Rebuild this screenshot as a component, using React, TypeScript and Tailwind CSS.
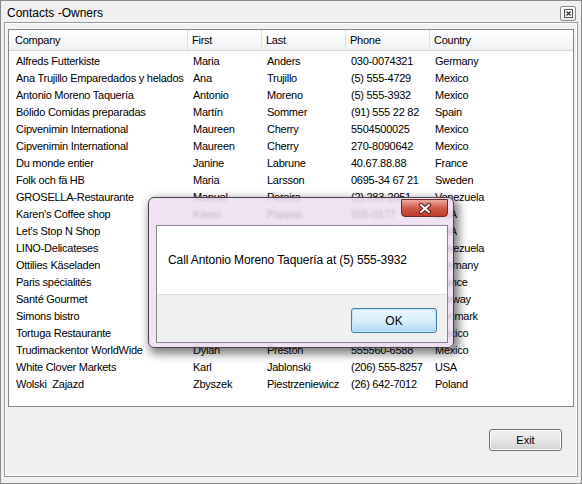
import React from 'react';

const rows = [
    ['Alfreds Futterkiste', 'Maria', 'Anders', '030-0074321', 'Germany'],
    ['Ana Trujillo Emparedados y helados', 'Ana', 'Trujillo', '(5) 555-4729', 'Mexico'],
    ['Antonio Moreno Taquería', 'Antonio', 'Moreno', '(5) 555-3932', 'Mexico'],
    ['Bólido Comidas preparadas', 'Martín', 'Sommer', '(91) 555 22 82', 'Spain'],
    ['Cipvenimin International', 'Maureen', 'Cherry', '5504500025', 'Mexico'],
    ['Cipvenimin International', 'Maureen', 'Cherry', '270-8090642', 'Mexico'],
    ['Du monde entier', 'Janine', 'Labrune', '40.67.88.88', 'France'],
    ['Folk och fä HB', 'Maria', 'Larsson', '0695-34 67 21', 'Sweden'],
    ['GROSELLA-Restaurante', 'Manuel', 'Pereira', '(2) 283-2951', 'Venezuela'],
    ["Karen's Coffee shop", 'Karen', 'Pappas', '555-0177', 'USA'],
    ["Let's Stop N Shop", 'Jaime', 'Yorres', '(415) 555-5938', 'USA'],
    ['LINO-Delicateses', 'Felipe', 'Izquierdo', '(8) 34-56-12', 'Venezuela'],
    ['Ottilies Käseladen', 'Henriette', 'Pfalzheim', '0221-0644327', 'Germany'],
    ['Paris spécialités', 'Marie', 'Bertrand', '(1) 42.34.22.66', 'France'],
    ['Santé Gourmet', 'Jonas', 'Bergulfsen', '07-98 92 35', 'Norway'],
    ['Simons bistro', 'Jytte', 'Petersen', '31 12 34 56', 'Denmark'],
    ['Tortuga Restaurante', 'Miguel', 'Angel Paolino', '(5) 555-2933', 'Mexico'],
    ['Trudimackentor WorldWide', 'Dylan', 'Preston', '555560-6588', 'Mexico'],
    ['White Clover Markets', 'Karl', 'Jablonski', '(206) 555-8257', 'USA'],
    ['Wolski  Zajazd', 'Zbyszek', 'Piestrzeniewicz', '(26) 642-7012', 'Poland'],
];

const headers = ['Company', 'First', 'Last', 'Phone', 'Country'];

function MessageBox() {
    return (
        <div className="absolute left-[147px] top-[196px] w-[306px] h-[151px] rounded-[6px] border border-[#4a3f4a] bg-[rgba(238,220,240,0.8)] backdrop-blur-[1.5px] shadow-[3px_4px_10px_2px_rgba(0,0,0,0.5)] pt-[27px] pl-[7px] pr-[5px] pb-[4px]">
            {/* close */}
            <div className="absolute top-[1px] right-[5px] w-[47px] h-[18px] rounded-b-[4px] border border-[#6e2a22] bg-gradient-to-b from-[#e9a99c] via-[#cf5a49] to-[#c0392b] flex items-center justify-center">
                <svg width="14" height="11" viewBox="0 0 14 11">
                    <path d="M3 2 L11 9 M11 2 L3 9" stroke="#5a1d16" strokeWidth="4.2" strokeLinecap="round" />
                    <path d="M3 2 L11 9 M11 2 L3 9" stroke="#ffffff" strokeWidth="2.2" strokeLinecap="round" />
                </svg>
            </div>
            <div className="h-full border border-[#8d8390] flex flex-col">
                <div className="h-[68px] bg-white flex items-center pl-[11px]">
                    <span className="text-[12px] tracking-[-0.1px]">Call Antonio Moreno Taquería at (5) 555-3932</span>
                </div>
                <div className="flex-1 bg-[#f0f0f0] border-t border-[#dfdfdf] flex justify-end items-start pt-[13px] pr-[10px]">
                    <div className="w-[86px] h-[25px] rounded-[3px] border border-[#3c7fb1] bg-gradient-to-b from-[#eaf6fd] via-[#d9f0fc] to-[#a7d9f5] shadow-[inset_0_0_0_1px_#c4e5f6] flex items-center justify-center text-[12px]">
                        OK
                    </div>
                </div>
            </div>
        </div>
    );
}

export default function App() {
    return (
        <div className="relative w-[582px] h-[484px] bg-[#f0f0f0] border border-[#8a8a8a] overflow-hidden font-['Liberation_Sans',Arial,sans-serif] text-black">
            <div className="flex items-center h-[21px] pl-[6px] pr-[5px]">
                <span className="text-[12px] mt-[2px]">Contacts -Owners</span>
                <div className="ml-auto mt-[3px] w-[16px] h-[15px] rounded-[2px] border border-[#8a8a8a] bg-gradient-to-b from-white to-[#ececec] flex items-center justify-center">
                    <svg width="9" height="9" viewBox="0 0 9 9">
                        <rect x="0.5" y="0.5" width="8" height="8" fill="none" stroke="#555" strokeWidth="1" />
                        <path d="M2.5 2.5 L6.5 6.5 M6.5 2.5 L2.5 6.5" stroke="#333" strokeWidth="1.2" />
                    </svg>
                </div>
            </div>

            <div className="mx-[3px] h-[455px] border border-[#9a9a9a] shadow-[inset_0_0_0_1px_#ffffff] pt-[6px] px-[3px]">
                <div className="h-[378px] border border-[#828790] bg-white text-[11px] tracking-[-0.25px]">
                    <div className="grid grid-cols-[179px_74px_84px_84px_1fr] h-[21px] bg-gradient-to-b from-white to-[#f1f2f4] border-b border-[#d5d5d5]">
                        {headers.map((h, i) => (
                            <div key={h} className={`flex items-center ${i === 0 ? 'pl-[6px]' : 'pl-[4px]'} ${i < 4 ? 'border-r border-[#dedfe2]' : ''}`}>
                                {h}
                            </div>
                        ))}
                    </div>
                    <div className="pt-[2px]">
                        {rows.map((r, idx) => (
                            <div key={idx} className="grid grid-cols-[179px_74px_84px_84px_1fr] h-[17px] leading-[17px]">
                                {r.map((c, i) => (
                                    <div key={i} className={`whitespace-pre ${i === 0 ? 'pl-[7px]' : 'pl-[5px]'}`}>{c}</div>
                                ))}
                            </div>
                        ))}
                    </div>
                </div>
                <div className="flex justify-end pt-[22px] pr-[12px]">
                    <div className="w-[73px] h-[22px] rounded-[3px] border border-[#707070] bg-gradient-to-b from-[#f2f2f2] via-[#e6e6e6] to-[#d2d2d2] shadow-[inset_0_0_0_1px_#fcfcfc] flex items-center justify-center text-[11px]">
                        Exit
                    </div>
                </div>
            </div>

            <MessageBox />
        </div>
    );
}
